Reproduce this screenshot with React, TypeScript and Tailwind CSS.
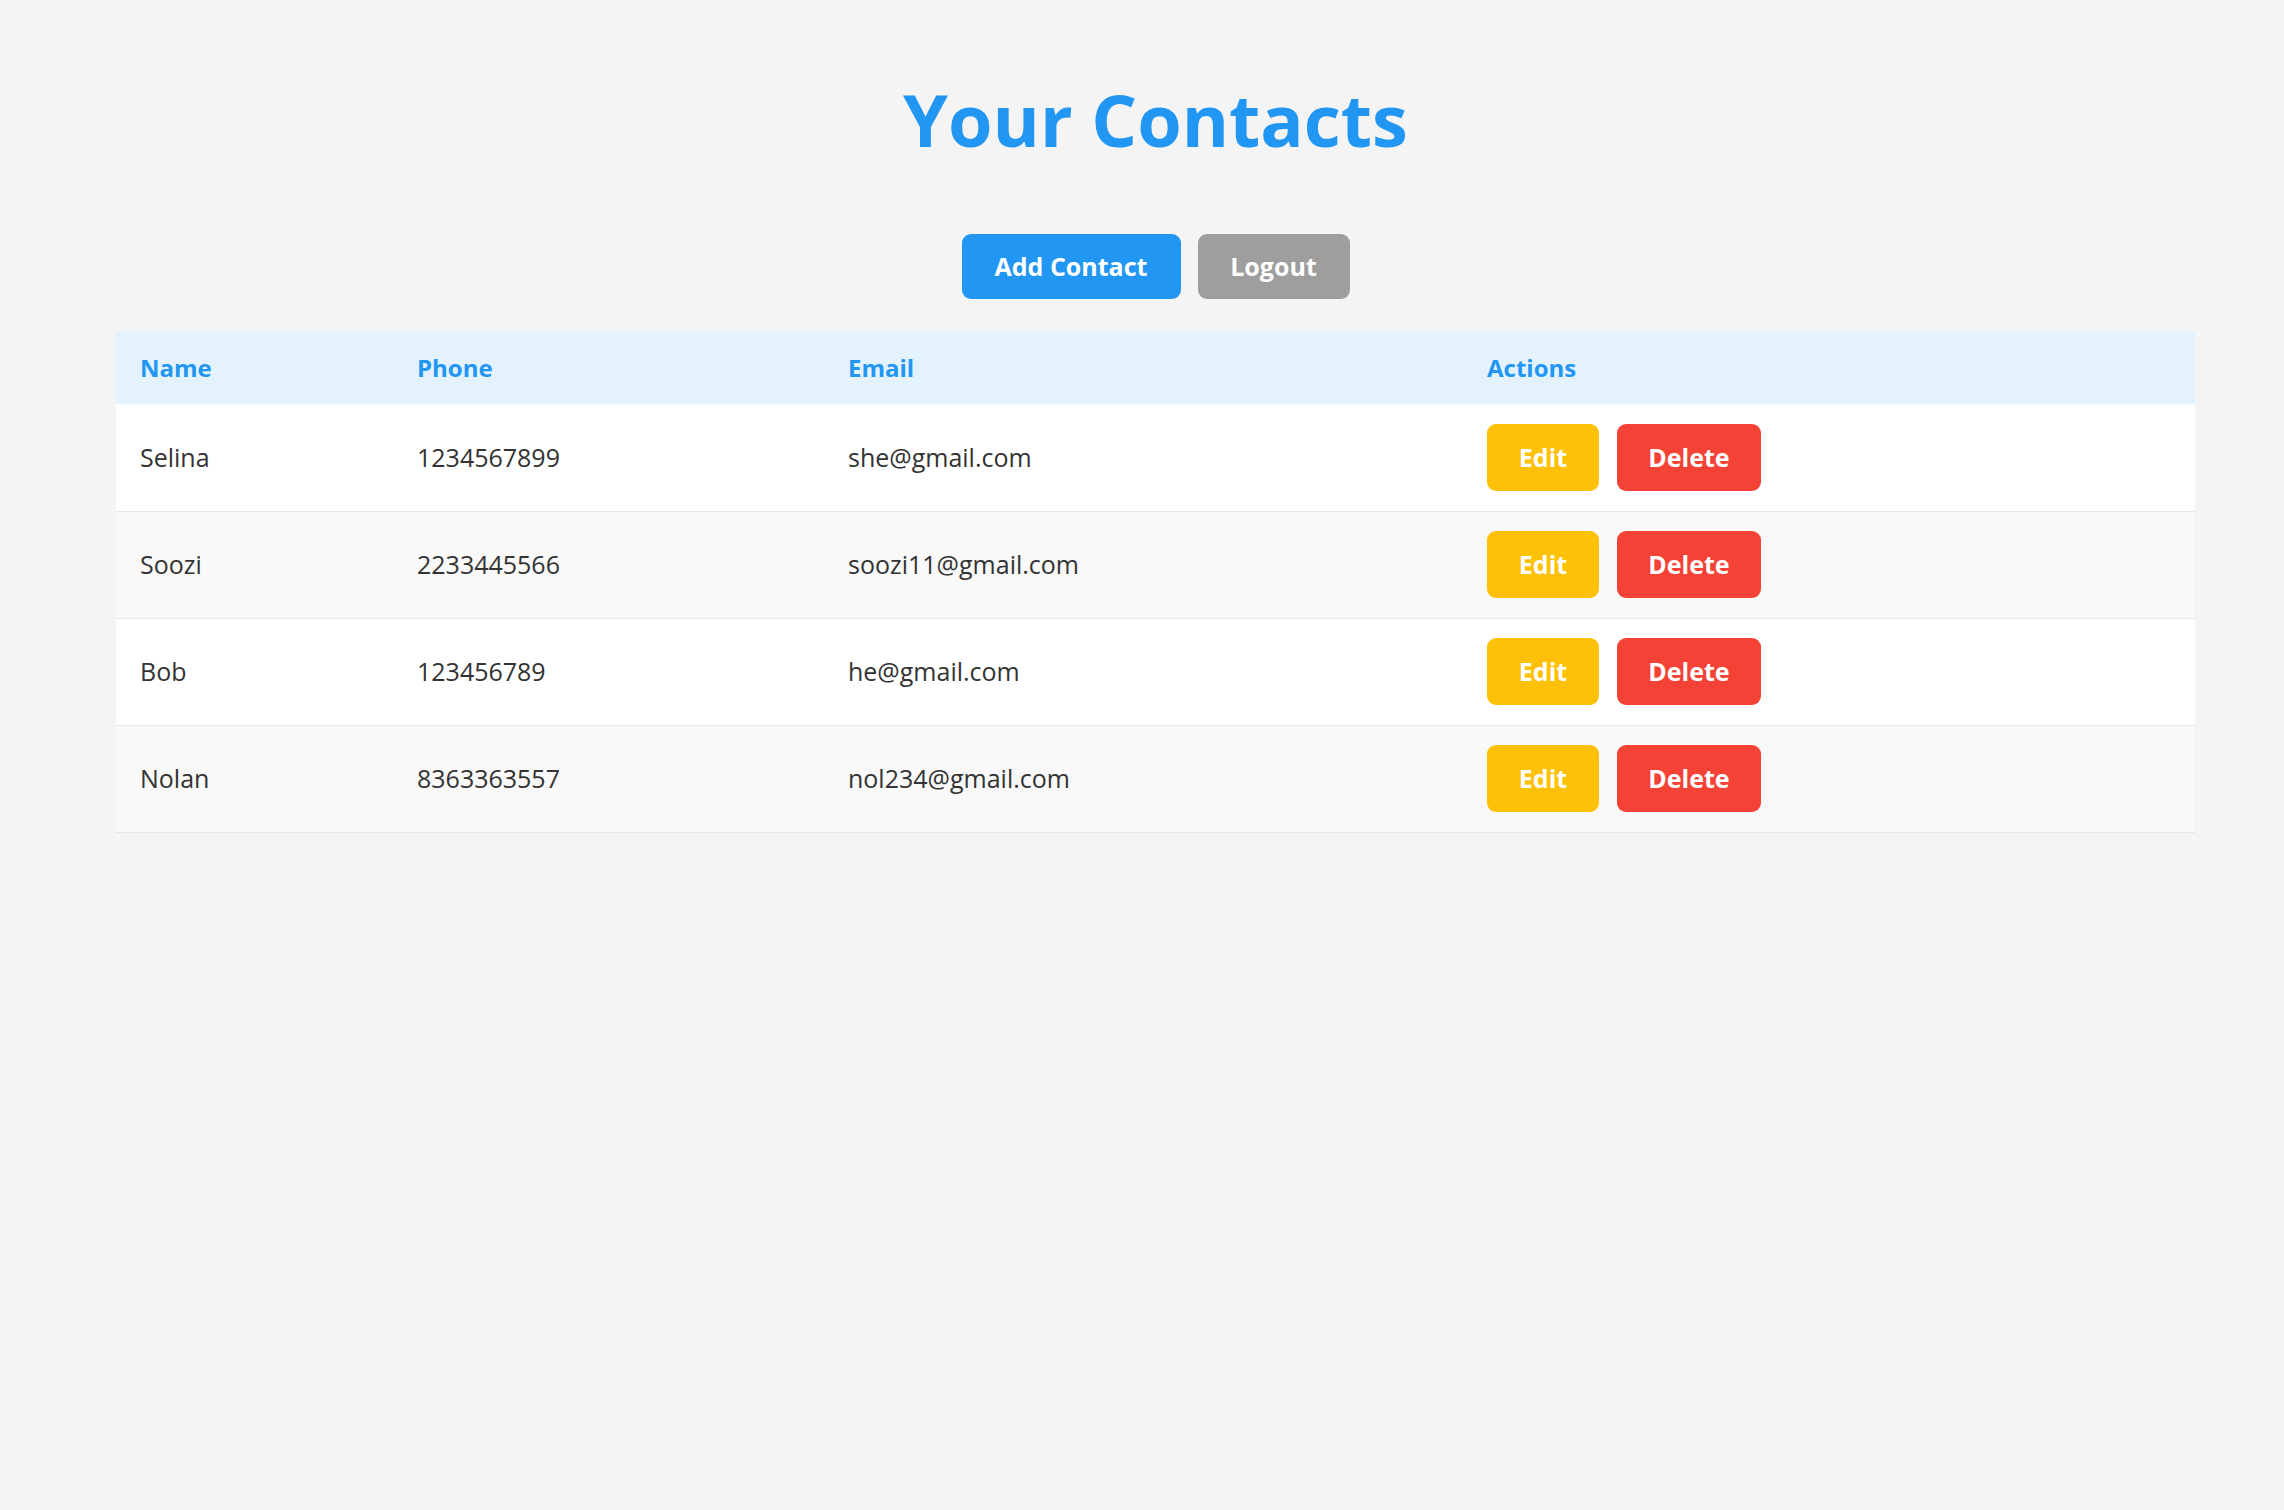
import React from 'react';

interface Contact {
  id: number;
  name: string;
  phone: string;
  email: string;
}

const contacts: Contact[] = [
  { id: 1, name: 'Selina', phone: '1234567899', email: 'she@gmail.com' },
  { id: 2, name: 'Soozi', phone: '2233445566', email: 'soozi11@gmail.com' },
  { id: 3, name: 'Bob', phone: '123456789', email: 'he@gmail.com' },
  { id: 4, name: 'Nolan', phone: '8363363557', email: 'nol234@gmail.com' },
];

const App: React.FC = () => {
  return (
    <div className="min-h-screen bg-[#f4f4f4] pl-[116px] pr-[89px] pt-[76px] font-['Open_Sans',sans-serif]">
      <h1 className="text-center text-[72px] font-bold leading-[1.2] text-[#2196f3]">Your Contacts</h1>

      {/* Top actions */}
      <div className="mt-[72px] flex justify-center gap-[17px]">
        <button className="h-[65px] w-[219px] rounded-[9px] bg-[#2196f3] text-[25px] font-bold text-white">
          Add Contact
        </button>
        <button className="h-[65px] w-[152px] rounded-[9px] bg-[#9e9e9e] text-[25px] font-bold text-white">
          Logout
        </button>
      </div>

      {/* Contacts table */}
      <table className="mt-[33px] w-full border-collapse text-left">
        <thead>
          <tr className="bg-[#e3f2fd]">
            <th className="h-[72px] w-[277px] px-[24px] text-[24px] font-bold text-[#2196f3]">Name</th>
            <th className="h-[72px] w-[431px] px-[24px] text-[24px] font-bold text-[#2196f3]">Phone</th>
            <th className="h-[72px] w-[639px] px-[24px] text-[24px] font-bold text-[#2196f3]">Email</th>
            <th className="h-[72px] px-[24px] text-[24px] font-bold text-[#2196f3]">Actions</th>
          </tr>
        </thead>
        <tbody>
          {contacts.map((c, i) => (
            <tr
              key={c.id}
              className={`border-b border-[#e6e6e6] ${i % 2 === 1 ? 'bg-[#f9f9f9]' : 'bg-white'}`}
            >
              <td className="h-[107px] px-[24px] text-[25px] text-[#333]">{c.name}</td>
              <td className="h-[107px] px-[24px] text-[25px] text-[#333]">{c.phone}</td>
              <td className="h-[107px] px-[24px] text-[25px] text-[#333]">{c.email}</td>
              <td className="h-[107px] px-[24px]">
                <div className="flex gap-[18px]">
                  <button className="h-[67px] w-[112px] rounded-[9px] bg-[#ffc107] text-[25px] font-bold text-white">
                    Edit
                  </button>
                  <button className="h-[67px] w-[144px] rounded-[9px] bg-[#f44336] text-[25px] font-bold text-white">
                    Delete
                  </button>
                </div>
              </td>
            </tr>
          ))}
        </tbody>
      </table>
    </div>
  );
};

export default App;
